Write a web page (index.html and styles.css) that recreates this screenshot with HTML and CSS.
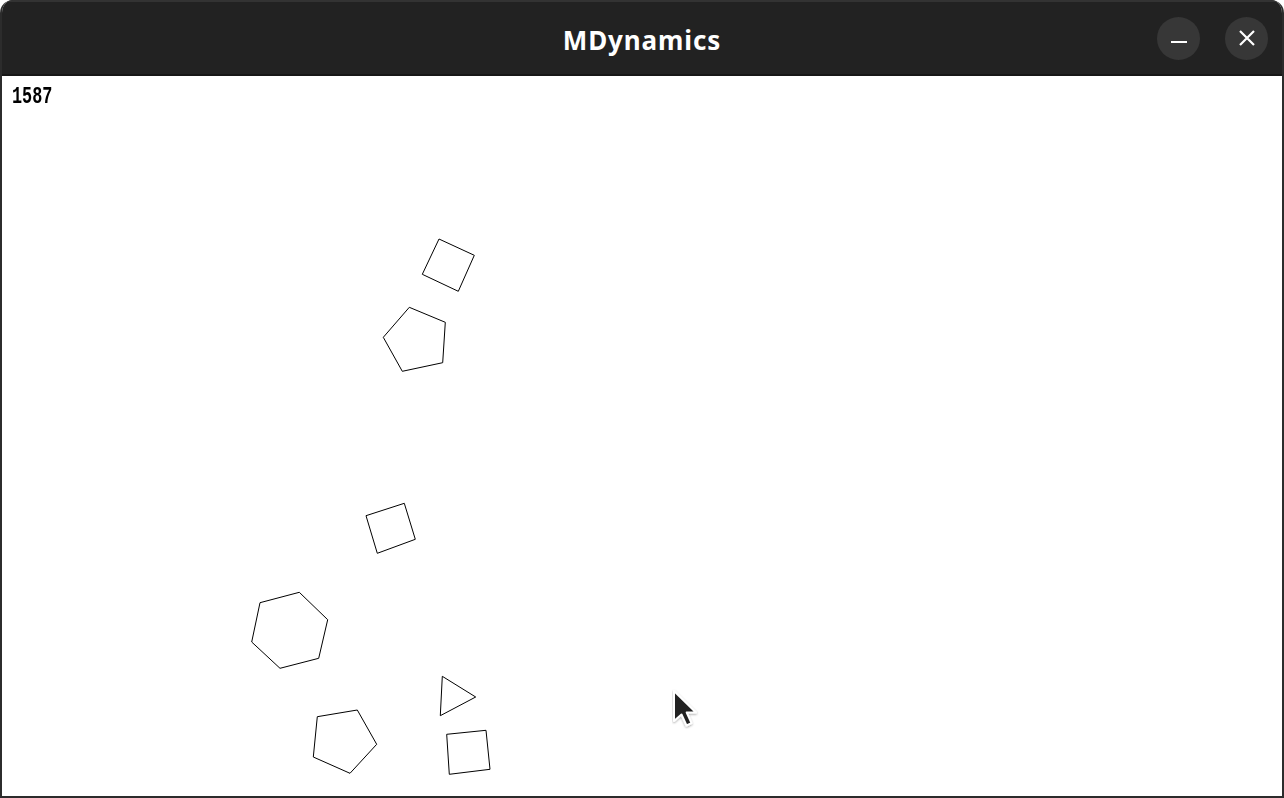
FILE: index.html
```html
<!DOCTYPE html>
<html>
<head>
<meta charset="utf-8">
<title>MDynamics</title>
<link rel="stylesheet" href="styles.css">
</head>
<body>
<div class="window">
  <header class="titlebar">
    <div class="spacer"></div>
    <div class="title">MDynamics</div>
    <div class="controls">
      <button class="ctl" aria-label="Minimize">
        <svg width="16" height="16" viewBox="0 0 16 16"><rect x="0" y="11" width="16" height="2" fill="#fff"/></svg>
      </button>
      <button class="ctl" aria-label="Close">
        <svg width="16" height="16" viewBox="0 0 16 16"><path d="M1 1 L15 15 M15 1 L1 15" stroke="#fff" stroke-width="2.2" fill="none"/></svg>
      </button>
    </div>
  </header>
  <main class="canvas">
    <div class="counter">1587</div>
    <svg class="scene" width="1280" height="720" viewBox="2 76 1280 720">
      <g fill="none" stroke="#000" stroke-width="1">
        <polygon points="439,239 474.3,255.3 458.3,291.3 422.3,274.3"/>
        <polygon points="409.3,307.3 445.3,322.3 442.7,362.7 402.3,371.3 383.3,337.3"/>
        <polygon points="366,515.7 404.3,503.3 415.3,539.3 377.3,553.3"/>
        <polygon points="260,602.7 299.3,592.3 327.7,619.7 318.7,658.3 280,668.3 251.7,642"/>
        <polygon points="317.3,716.7 357.3,710 376.7,744.3 350,773.3 313.3,757"/>
        <polygon points="442.3,676.3 475.7,697 440.3,715.7"/>
        <polygon points="446.7,734.3 486,730.3 490,769.3 449.3,774.3"/>
      </g>
    </svg>
    <svg class="cursor" width="32" height="44" viewBox="0 0 32 44">
      <defs>
        <filter id="sh" x="-30%" y="-30%" width="160%" height="160%">
          <feDropShadow dx="0" dy="1" stdDeviation="1.2" flood-color="#000" flood-opacity="0.35"/>
        </filter>
      </defs>
      <path d="M2 2 L2 32 L9.5 25.5 L14.5 36.5 L19.5 34.2 L14.7 23.5 L24 23.5 Z" fill="#222" stroke="#fff" stroke-width="2" stroke-linejoin="round" filter="url(#sh)"/>
    </svg>
  </main>
</div>
</body>
</html>
```

FILE: styles.css
```css
html, body {
  margin: 0;
  padding: 0;
  background: #ffffff;
}
.window {
  width: 1284px;
  height: 798px;
  box-sizing: border-box;
  border: 2px solid #2c2c2c;
  border-top: 0;
  border-radius: 13px 13px 0 0;
  overflow: hidden;
  display: flex;
  flex-direction: column;
  background: #fff;
}
.titlebar {
  height: 76px;
  box-sizing: border-box;
  flex: none;
  background: #222222;
  border-top: 2px solid #333333;
  border-bottom: 2px solid #171717;
  display: grid;
  grid-template-columns: 1fr auto 1fr;
  align-items: center;
  font-family: "Noto Sans", "Open Sans", sans-serif;
}
.title {
  color: #ffffff;
  font-weight: 700;
  font-size: 26px;
  letter-spacing: 0.9px;
  padding-top: 3px;
}
.controls {
  display: flex;
  justify-content: flex-end;
  gap: 25px;
  padding-right: 14px;
}
.ctl {
  width: 43px;
  height: 43px;
  border-radius: 50%;
  border: 0;
  padding: 0;
  background: #373737;
  display: flex;
  align-items: center;
  justify-content: center;
}
.canvas {
  flex: 1;
  position: relative;
  background: #ffffff;
}
.counter {
  position: absolute;
  left: 10px;
  top: 9px;
  font-family: "Liberation Mono", "DejaVu Sans Mono", monospace;
  font-weight: 700;
  font-size: 24px;
  line-height: 1;
  color: #000;
  transform: scaleX(0.7);
  transform-origin: 0 0;
}
.scene {
  position: absolute;
  left: 0;
  top: 0;
}
.cursor {
  position: absolute;
  left: 670px;
  top: 613px;
}
```
